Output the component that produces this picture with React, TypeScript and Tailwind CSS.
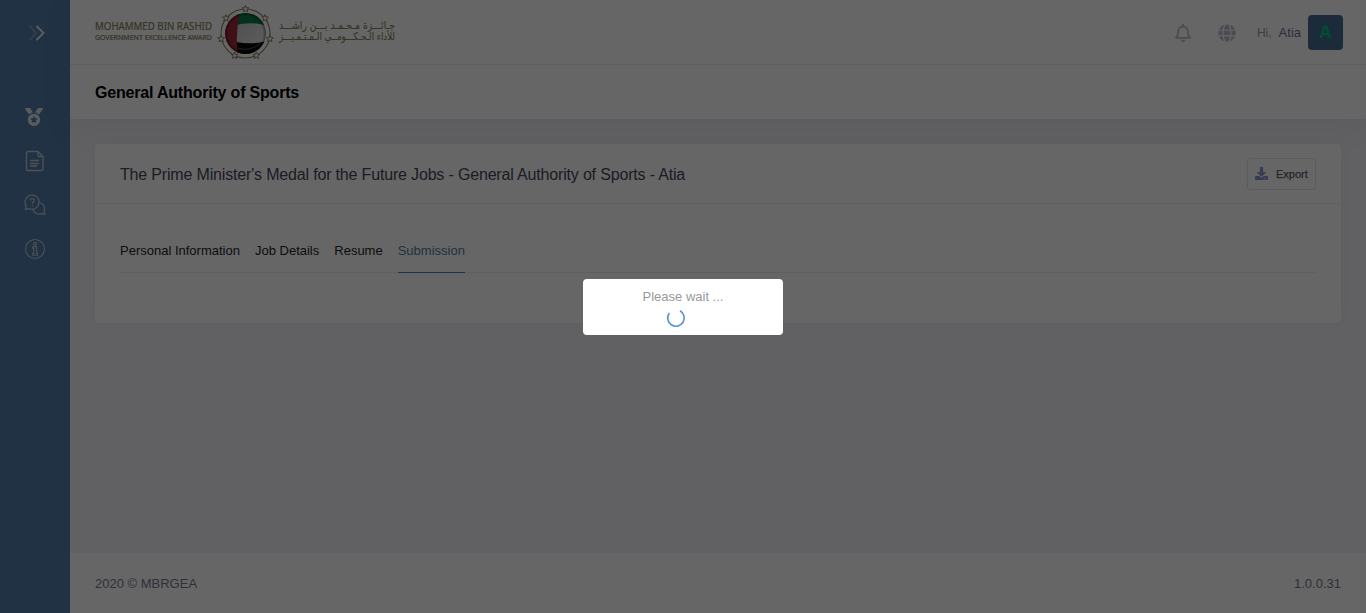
import React from "react";
import { FaDownload, FaGlobe, FaMedal, FaRegBell } from "react-icons/fa";

const STARS = [0, 1, 2, 3, 4, 5, 6].map((i) => {
  const a = (i * 2 * Math.PI) / 7 - Math.PI / 2;
  return { x: 150.5 + 25 * Math.cos(a), y: 33.5 + 24.5 * Math.sin(a) };
});

const starPoints = (cx: number, cy: number) =>
  Array.from({ length: 10 }, (_, k) => {
    const r = k % 2 ? 1.6 : 3.6;
    const a = (k * Math.PI) / 5 - Math.PI / 2;
    return `${(cx + r * Math.cos(a)).toFixed(2)},${(cy + r * Math.sin(a)).toFixed(2)}`;
  }).join(" ");

function Logo() {
  return (
    <svg width="306" height="64" viewBox="0 0 306 64" className="block overflow-visible">
      <defs>
        <clipPath id="ball">
          <circle cx="150.5" cy="33.5" r="20.5" />
        </clipPath>
        <radialGradient id="shade" gradientUnits="userSpaceOnUse" cx="150.5" cy="33.5" r="20.5">
          <stop offset="0.85" stopColor="#000" stopOpacity="0" />
          <stop offset="1" stopColor="#000" stopOpacity="0.45" />
        </radialGradient>
        <linearGradient id="silver" x1="0" y1="0" x2="1" y2="1">
          <stop offset="0" stopColor="#b4b4b4" />
          <stop offset="1" stopColor="#f4f4f4" />
        </linearGradient>
      </defs>
      <g fill="#8b8060" stroke="#8b8060" strokeWidth="0.2">
        <text x="0" y="30" fontSize="11" textLength="117" lengthAdjust="spacingAndGlyphs" fontFamily="'Noto Sans', sans-serif">
          MOHAMMED BIN RASHID
        </text>
        <text x="0" y="40" fontSize="7" textLength="117" lengthAdjust="spacingAndGlyphs" fontFamily="'Noto Sans', sans-serif">
          GOVERNMENT EXCELLENCE AWARD
        </text>
      </g>
      <circle cx="150.500" cy="33.500" r="24.500" fill="none" stroke="#8b8060" strokeWidth="1.100" />
      <g clipPath="url(#ball)">
        <rect x="129" y="12" width="43" height="43" fill="url(#silver)" />
        <path d="M141 12Q158 9 172 12V26Q157 21 141 25Z" fill="#087c4a" />
        <path d="M141 42Q157 45 172 41V56H141Z" fill="#080808" />
        <path d="M128 12H145Q140 33 143 55H128Z" fill="#a0283a" />
        <circle cx="150.500" cy="33.500" r="20.500" fill="url(#shade)" />
        <path d="M143 48Q154 52 165 44" fill="none" stroke="#555" strokeWidth="1" />
      </g>
      {STARS.map((s) => (
        <polygon key={s.x} points={starPoints(s.x, s.y)} fill="#fff" stroke="#8b8060" strokeWidth="1" />
      ))}
      <g fill="#8b8060" stroke="#8b8060" strokeWidth="0.15" fontFamily="'DejaVu Sans', sans-serif" direction="rtl">
        <text x="300" y="29" fontSize="11" textLength="116" lengthAdjust="spacingAndGlyphs">
          جـائـــزة مـحـمـد بـــن راشـــد
        </text>
        <text x="300" y="40" fontSize="10.500" textLength="116" lengthAdjust="spacingAndGlyphs">
          للأداء الـحـكـــومــي الـمـتـمـيـــز
        </text>
      </g>
    </svg>
  );
}

function Sidebar() {
  return (
    <aside className="flex w-[70px] shrink-0 flex-col items-center bg-[#507daa] text-[#dfe5ea]">
      <div className="flex h-[65px] items-center pl-1">
        <svg width="18" height="18" viewBox="0 0 18 18" fill="none" strokeWidth="2" strokeLinecap="round" strokeLinejoin="round">
          <path d="M2 2.5L8 9L2 15.5" stroke="#7c99b5" />
          <path d="M9 2.5L15.5 9L9 15.5" stroke="#e6e6e6" />
        </svg>
      </div>
      <nav className="mt-[30px] flex flex-col items-center">
        <span className="flex h-11 items-center pr-[3px]">
          <FaMedal size={18} />
        </span>
        <span className="flex h-11 items-center">
          <svg width="20" height="22" viewBox="0 0 20 22" fill="none" stroke="#c4cdd6" strokeWidth="1.3">
            <path d="M3 1.5H13L18 6.5V18.5Q18 20.5 16 20.5H3Q1.5 20.5 1.5 18.5V3.5Q1.5 1.5 3 1.5Z" />
            <path d="M13 1.5V5Q13 6.5 14.500 6.500H18M5 10.500H14M5 13.500H14M5 16H12" />
          </svg>
        </span>
        <span className="flex h-11 items-center">
          <svg width="22" height="22" viewBox="0 0 22 22" fill="none" stroke="#c4cdd6" strokeWidth="1.2">
            <path d="M1.500 15.300L2 11.600A7 7 0 1 1 5.200 14.500Q3.500 15.300 1.500 15.300Z" />
            <path d="M15.600 8.500A6.200 6.200 0 0 1 20 17.200Q20 19 21 20.300Q19 20.300 17.300 19.500A6.200 6.200 0 0 1 8.800 15" />
            <path d="M6.200 6.500Q6.200 4.500 8.300 4.500Q10.300 4.600 10.200 6.400Q10.100 7.500 8.500 8.500V9.700M8.500 10.900V12" />
          </svg>
        </span>
        <span className="flex h-11 items-center">
          <svg width="22" height="22" viewBox="0 0 22 22" fill="none" stroke="#c4cdd6" strokeWidth="1.1">
            <circle cx="11" cy="11" r="9.500" />
            <rect x="9.600" y="4.500" width="3" height="2.600" rx="1" />
            <path d="M8.700 8.700H12.600V15.500H13.600V17.200H8.700V15.500H9.700V10.300H8.700Z" />
          </svg>
        </span>
      </nav>
    </aside>
  );
}

const TABS = ["Personal Information", "Job Details", "Resume"];

export default function App() {
  return (
    <div className="relative flex h-[613px] w-full overflow-hidden bg-[#f2f3f8] font-['Liberation_Sans',Arial,sans-serif] text-[13px]">
      <Sidebar />
      <div className="flex min-w-0 flex-1 flex-col">
        <div className="bg-white shadow-[0_10px_30px_0_rgba(82,63,105,0.08)]">
          <header className="flex h-[65px] items-center justify-between border-b border-[#ebedf2] pr-[23px] pl-[25px]">
            <Logo />
            <div className="flex items-center">
              <FaRegBell size={18} className="mt-px mr-[26px] text-[#bcbecf]" />
              <FaGlobe size={18} className="mt-px mr-[21px] text-[#bcbecf]" />
              <span className="mr-[7px] pt-px text-[12px] text-[#959cb6]">Hi,</span>
              <span className="mr-[7px] pt-px text-[13px] text-[#6c7293]">Atia</span>
              <span className="flex size-[35px] items-center justify-center rounded bg-[#446c91] pt-px text-[18px] font-bold text-[#0abb87]">A</span>
            </div>
          </header>
          <div className="flex h-[54px] items-center pt-px pl-[25px]">
            <h1 className="text-[16px] font-bold tracking-[-0.19px] text-black">General Authority of Sports</h1>
          </div>
        </div>
        <main className="flex-1 p-[25px]">
          <section className="h-[179px] rounded bg-white shadow-[0_0_13px_0_rgba(82,63,105,0.05)]">
            <div className="flex h-[60px] items-center justify-between border-b border-[#ebedf2] px-[25px]">
              <h2 className="pt-[2px] text-[16px] tracking-[-0.171px] text-[#48465b]">The Prime Minister's Medal for the Future Jobs - General Authority of Sports - Atia</h2>
              <button className="flex h-8 w-[69px] items-center gap-[8px] rounded-[3px] border border-[#e2e5ec] pl-[7px] text-[11px] text-[#595d6e]">
                <FaDownload size={13} className="shrink-0 text-[#8c97cc]" />
                <span className="pt-px [-webkit-text-stroke:0.25px_#595d6e]">Export</span>
              </button>
            </div>
            <div className="px-[25px] pt-[25px]">
              <div className="flex h-11 gap-[15px] border-b border-[#ebedf2] text-[#212529]">
                {TABS.map((tab) => (
                  <span key={tab} className="pt-[12px]">{tab}</span>
                ))}
                <span className="-mb-px border-b border-[#507daa] pt-[12px] text-[#507daa]">Submission</span>
              </div>
            </div>
          </section>
        </main>
        <footer className="flex h-[60px] shrink-0 items-center justify-between bg-white px-[25px] pt-[2px] text-[13px] text-[#74788d]">
          <span>2020 © MBRGEA</span>
          <span>1.0.0.31</span>
        </footer>
      </div>
      <div className="absolute inset-0 flex items-center justify-center bg-black/60">
        <div className="flex h-14 w-[200px] flex-col items-center rounded bg-white pt-[8px] text-[#999]">
          <span className="leading-5">Please wait ...</span>
          <svg width="20" height="20" viewBox="0 0 20 20" fill="none" className="mt-[1px] mr-[14px]">
            <path d="M14 2.700A8.300 8.300 0 1 1 3.300 5" stroke="#5a96cb" strokeWidth="1.700" />
          </svg>
        </div>
      </div>
    </div>
  );
}
